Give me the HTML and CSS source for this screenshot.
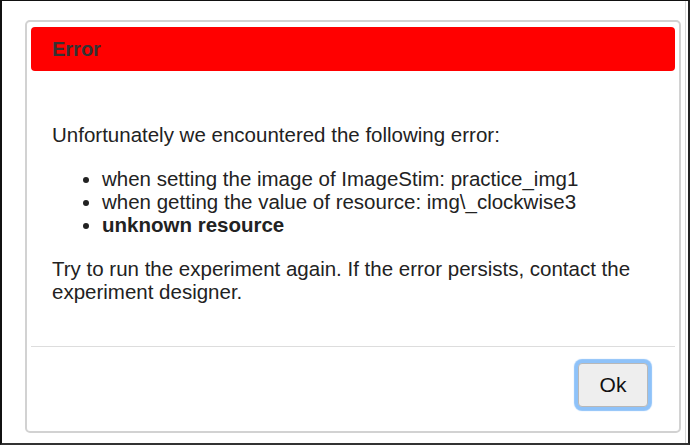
FILE: index.html
```html
<!DOCTYPE html>
<html lang="en">
<head>
    <meta charset="UTF-8">
    <meta name="viewport" content="width=device-width, initial-scale=1.0">
    <title>Error</title>
    <link rel="stylesheet" href="styles.css">
</head>
<body>
    <div class="window">
        <div class="dialog">
            <div class="dialog-header">
                <span class="dialog-title">Error</span>
            </div>
            <div class="dialog-body">
                <p>Unfortunately we encountered the following error:</p>
                <ul class="error-list">
                    <li>when setting the image of ImageStim: practice_img1</li>
                    <li>when getting the value of resource: img\_clockwise3</li>
                    <li><strong>unknown resource</strong></li>
                </ul>
                <p>Try to run the experiment again. If the error persists, contact the experiment designer.</p>
            </div>
            <div class="dialog-footer">
                <button class="ok-button">Ok</button>
            </div>
        </div>
    </div>
</body>
</html>
```

FILE: styles.css
```css
html, body {
    margin: 0;
    padding: 0;
    background-color: #fff;
}
body {
    font-family: 'Liberation Sans', Arial, sans-serif;
    width: 690px;
    height: 445px;
}
.window {
    box-sizing: border-box;
    height: 445px;
    display: flex;
    flex-direction: column;
    padding: 19px 7px 10px 23px;
    border-top: 1px solid #111;
    border-left: 2px solid #111;
    border-right: 2px solid #222;
    border-bottom: 2px solid #333;
    box-shadow: inset -2px 0 0 #fff, inset -3px 0 0 #d8d8d8;
}
.dialog {
    flex: 1;
    display: flex;
    flex-direction: column;
    padding: 5px 4px;
    border: 2px solid #d2d2d2;
    border-radius: 5px;
}
.dialog-header {
    height: 44px;
    display: flex;
    align-items: center;
    padding-left: 21px;
    background-color: #ff0000;
    border-radius: 4px;
}
.dialog-title {
    font-size: 20px;
    font-weight: bold;
    color: #333;
}
.dialog-body {
    padding: 31px 21px 22px;
    font-size: 20.5px;
    line-height: 23px;
    color: #222;
    border-bottom: 1px solid #ddd;
}
.dialog-body p {
    margin: 21px 0;
}
.error-list {
    margin: 21px 0;
    padding-left: 50px;
}
.dialog-footer {
    display: flex;
    justify-content: flex-end;
    padding: 16px 27px 0 0;
}
.ok-button {
    box-sizing: border-box;
    width: 70px;
    height: 44px;
    font-family: 'Liberation Sans', Arial, sans-serif;
    font-size: 21px;
    color: #111;
    background-color: #eeeeee;
    border: 1px solid #b8b8b8;
    border-radius: 4px;
    box-shadow: 0 0 1px 4px #8ec2f9;
    cursor: pointer;
}
```
